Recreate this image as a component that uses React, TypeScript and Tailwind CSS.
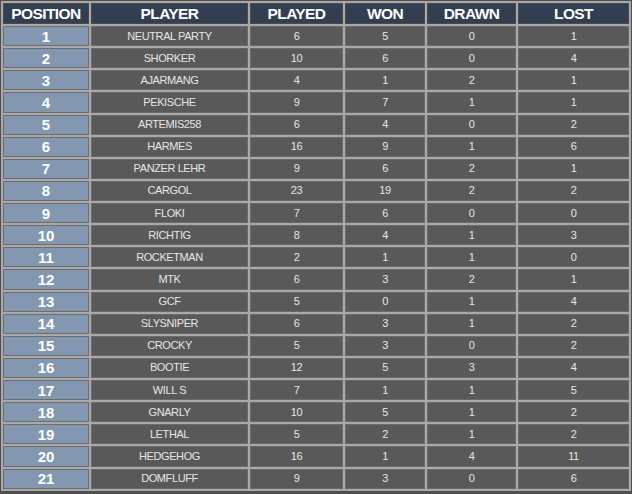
import React from 'react';

type Row = [string, number, number, number, number];

const rows: Row[] = [
  ['NEUTRAL PARTY', 6, 5, 0, 1],
  ['SHORKER', 10, 6, 0, 4],
  ['AJARMANG', 4, 1, 2, 1],
  ['PEKISCHE', 9, 7, 1, 1],
  ['ARTEMIS258', 6, 4, 0, 2],
  ['HARMES', 16, 9, 1, 6],
  ['PANZER LEHR', 9, 6, 2, 1],
  ['CARGOL', 23, 19, 2, 2],
  ['FLOKI', 7, 6, 0, 0],
  ['RICHTIG', 8, 4, 1, 3],
  ['ROCKETMAN', 2, 1, 1, 0],
  ['MTK', 6, 3, 2, 1],
  ['GCF', 5, 0, 1, 4],
  ['SLYSNIPER', 6, 3, 1, 2],
  ['CROCKY', 5, 3, 0, 2],
  ['BOOTIE', 12, 5, 3, 4],
  ['WILL S', 7, 1, 1, 5],
  ['GNARLY', 10, 5, 1, 2],
  ['LETHAL', 5, 2, 1, 2],
  ['HEDGEHOG', 16, 1, 4, 11],
  ['DOMFLUFF', 9, 3, 0, 6],
];

const headers = ['POSITION', 'PLAYER', 'PLAYED', 'WON', 'DRAWN', 'LOST'];

export default function App() {
  return (
    <div className="w-[632px] h-[494px] bg-[#4f4f4f] pt-px pl-px overflow-hidden">
      <div
        className="w-[630px] bg-[#a9a9a9] p-[2px] grid gap-[2px] grid-cols-[86px_157px_93px_80px_89px_111px] grid-rows-[21px_repeat(21,20.14px)]"
        style={{ fontFamily: '"Liberation Sans", Arial, sans-serif' }}
      >
        {headers.map((h) => (
          <div
            key={h}
            className="bg-[#323e51] border border-[#4a4a4a] flex items-center justify-center text-white font-bold text-[15.5px] tracking-[-0.6px] leading-none pt-px"
          >
            {h}
          </div>
        ))}
        {rows.map((r, i) => (
          <React.Fragment key={r[0]}>
            <div className="bg-[#8497b0] border border-[#6d6d6d] flex items-center justify-center text-white font-bold text-[15px] leading-none">
              {i + 1}
            </div>
            {r.map((v, j) => (
              <div
                key={j}
                className="bg-[#595959] border border-[#6a6a6a] flex items-center justify-center text-[#e6e6e6] text-[11px] tracking-[-0.4px] leading-none"
              >
                {v}
              </div>
            ))}
          </React.Fragment>
        ))}
      </div>
    </div>
  );
}
